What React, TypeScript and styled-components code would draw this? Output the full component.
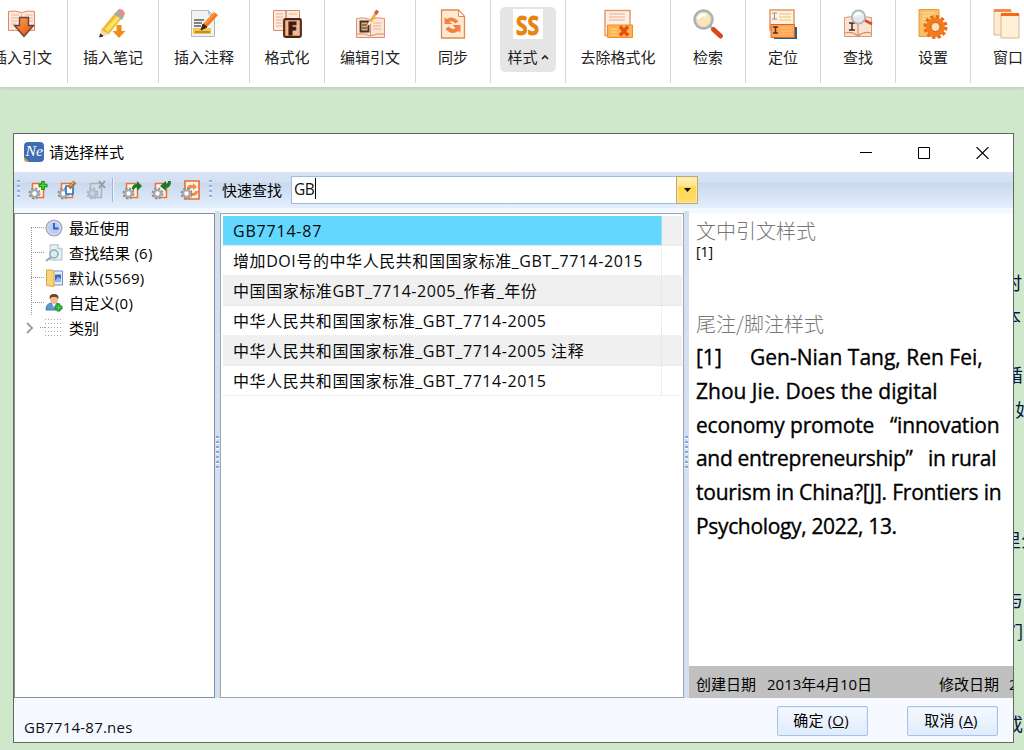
import React from "react";
import styled, { createGlobalStyle } from "styled-components";

const Global = createGlobalStyle`
  * { box-sizing: border-box; }
  html, body { margin: 0; padding: 0; }
  body {
    width: 1024px; height: 750px; overflow: hidden; background: #cfe8cc;
    font-family: "Open Sans", "Noto Sans CJK SC", sans-serif; color: #111;
  }
`;

const Page = styled.div`
  position: relative; width: 1024px; height: 750px; overflow: hidden; background: #cfe8cc;
`;
const Ribbon = styled.div`
  display: flex; height: 87px; background: #fff;
  box-shadow: 0 1px 0 #c3d3c1, 0 2px 2px #bdd3bb;
`;
const RibbonRow = styled.div`
  display: flex; flex: none; margin-left: -23px; height: 83px;
`;
const RibbonItem = styled.div<{ $w: number }>`
  flex: none; width: ${(p) => p.$w}px; height: 83px; border-right: 1px solid #d5d5d5;
  display: flex; justify-content: center; padding-top: 7px;
`;
const RibbonButton = styled.div<{ $active?: boolean }>`
  display: flex; flex-direction: column; align-items: center; height: 65px; padding: 2px 7px 0;
  border-radius: 5px; background: ${(p) => (p.$active ? "#e5e5e5" : "transparent")};
  svg { display: block; flex: none; }
`;
const RibbonLabel = styled.div`
  display: flex; align-items: center; gap: 3px; margin-top: 7px; height: 22px;
  font: 15px/22px "Noto Sans CJK SC", sans-serif; color: #222; white-space: nowrap;
`;

const DocFragment = styled.span<{ $x: number; $y: number }>`
  position: absolute; left: ${(p) => p.$x}px; top: ${(p) => p.$y}px;
  font: 18px/24px "Noto Sans CJK SC", sans-serif; color: #0b1245; white-space: nowrap;
`;

const Dialog = styled.div`
  position: absolute; left: 13px; top: 133px; width: 1001px; height: 610px;
  display: flex; flex-direction: column; background: #f6f9ff; border: 1px solid #606b60; overflow: hidden;
`;
const TitleBar = styled.div`
  display: flex; align-items: center; height: 38px; flex: none; padding: 0 24px 2px 10px; background: #fff;
`;
const Title = styled.div`
  flex: 1; margin-left: 5px; font: 15px/22px "Noto Sans CJK SC", sans-serif; color: #000;
`;
const WindowButtons = styled.div`
  display: flex; align-items: center; gap: 46px; padding-top: 2px; svg { display: block; }
`;
const Toolbar = styled.div`
  display: flex; align-items: center; height: 36px; flex: none; padding-left: 3px;
  background: linear-gradient(#d9e5f5 0, #d3e0f1 10px, #c9d8ed 11px, #d6e4f6 24px, #e4effd 36px);
`;
const Grip = styled.div<{ $ml?: number }>`
  width: 3px; height: 18px; flex: none; margin: -3px 1px 0 ${(p) => p.$ml || 0}px;
  background: repeating-linear-gradient(#8fb0dd 0 2px, #ecf3fc 2px 3px, transparent 3px 5px);
`;
const ToolIcons = styled.div<{ $ml: number }>`
  display: flex; gap: 9px; margin-left: ${(p) => p.$ml}px; svg { display: block; }
`;
const ToolSep = styled.div`
  width: 2px; height: 24px; margin-left: 6px; background: #9db6d8; border-right: 1px solid #f1f6fd;
`;
const SearchLabel = styled.div`
  margin-left: 9px; width: 69px; font: 15px/22px "Noto Sans CJK SC", sans-serif; color: #000; white-space: nowrap;
`;
const Combo = styled.div`
  display: flex; width: 407px; height: 28px; border: 1px solid #9fbbe3; background: #fff;
`;
const ComboText = styled.div`
  flex: 1; display: flex; align-items: center; padding: 0 0 3px 2px; font-size: 15.5px; line-height: 22px; letter-spacing: -0.4px;
`;
const Caret = styled.i`
  width: 1px; height: 21px; background: #000; margin-left: 1px;
`;
const ComboArrow = styled.div`
  display: flex; align-items: center; justify-content: center; width: 22px; height: 28px; margin: -1px -1px 0 0;
  border: 1px solid #c0a870; box-shadow: inset 0 0 0 1px #ffe9a0;
  background: linear-gradient(#fff1b8 0, #ffe48d 9px, #ffd54d 10px, #ffdf70 100%);
`;
const Strip = styled.div`
  height: 5px; flex: none; background: #f4f8ff;
`;
const Body = styled.div`
  display: flex; height: 485px; flex: none;
`;
const Tree = styled.div`
  width: 201px; flex: none; border: 1px solid #8a8f99; background: #fff; padding: 1px 0 0 16px;
`;
const TreeGroup = styled.div`
  position: relative; height: 100px;
  &::before {
    content: ""; position: absolute; left: 0; top: 13px; width: 1px; height: 88px;
    background: repeating-linear-gradient(#999 0 1px, transparent 1px 2px);
  }
`;
const TreeRow = styled.div`
  display: flex; align-items: center; height: 25px;
  svg { display: block; flex: none; }
`;
const Chevron = styled.svg`
  margin-left: -5px;
`;
const Dots = styled.div<{ $w: number; $ml?: number }>`
  width: ${(p) => p.$w}px; height: 1px; margin-left: ${(p) => p.$ml || 0}px; flex: none;
  background: repeating-linear-gradient(90deg, #999 0 1px, transparent 1px 2px);
`;
const TreeIcon = styled.div`
  width: 18px; height: 18px; margin-left: 1px;
`;
const TreeText = styled.div<{ $ls?: number }>`
  margin-left: 6px; font-size: 15px; line-height: 24px; letter-spacing: ${(p) => p.$ls || 0}px; white-space: nowrap; color: #000;
`;
const Splitter = styled.div`
  width: 5px; flex: none; margin-top: -2px; background: #d3e0f2; display: flex; align-items: center; justify-content: center;
  &::before {
    content: ""; width: 3px; height: 33px; margin-bottom: 4px;
    background: repeating-linear-gradient(#83a9de 0 2px, #f4f8ff 2px 3px, transparent 3px 5px);
  }
`;
const List = styled.div`
  width: 464px; flex: none; border: 1px solid #a0a5ad; background: #fff; padding: 2px 1px 0 2px;
`;
const ListRow = styled.div<{ $bg: string }>`
  display: flex; height: 30px; border-bottom: 1px dotted #e4e4e4; background: ${(p) => p.$bg};
`;
const Cell = styled.div<{ $sel?: boolean; $ls: number }>`
  width: 439px; height: 29px; padding-left: 10px; border-right: 1px dotted #dedede;
  background: ${(p) => (p.$sel ? "#63d8ff" : "transparent")};
  font-size: 16px; line-height: 31px; letter-spacing: ${(p) => p.$ls}px; white-space: nowrap; color: #080808;
`;
const Preview = styled.div`
  flex: 1; min-width: 0; display: flex; flex-direction: column; background: #fff; overflow: hidden;
`;
const PreviewBody = styled.div`
  flex: 1; padding: 4px 0 0 7px;
`;
const Heading = styled.div`
  font: 300 20px/28px "Noto Sans CJK SC", sans-serif; color: #777; white-space: nowrap;
`;
const Sample = styled.div`
  height: 65px; font-size: 14px; line-height: 14px; color: #000;
`;
const Cite = styled.div`
  padding-top: 3px;
`;
const CiteLine = styled.div<{ $ls: number }>`
  font: 500 21px/33.75px "Open Sans", sans-serif; letter-spacing: ${(p) => p.$ls}px; white-space: pre; color: #000;
  -webkit-text-stroke: 0.35px #000;
`;
const CiteMark = styled.span`
  display: inline-block; width: 54px;
`;
const Dates = styled.div`
  display: flex; align-items: center; height: 32px; flex: none; padding: 2px 0 0 7px; background: #c0c0c0;
  font-size: 15px; white-space: nowrap; overflow: hidden; color: #000;
`;
const DateCell = styled.span<{ $w: number }>`
  width: ${(p) => p.$w}px; flex: none;
`;
const Footer = styled.div`
  flex: 1; display: flex; align-items: flex-start; padding: 8px 15px 0 10px;
`;
const FileName = styled.div`
  flex: 1; margin-top: 10px; font-size: 15px; line-height: 22px; letter-spacing: 0.23px; color: #111;
`;
const Button = styled.div`
  width: 91px; height: 30px; margin-left: 39px; padding-right: 3px; border: 1px solid #a3c3ee; border-radius: 2px;
  box-shadow: inset 0 0 0 1px #e3eefc; background: linear-gradient(#f5f9ff, #dfebfb);
  font-size: 15px; line-height: 27px; text-align: center; letter-spacing: 0.2px; color: #000;
`;

const ribbonIcons: Record<string, React.ReactNode> = {
  cite: (
    <>
      <defs><linearGradient id="dn" x1="0" y1="0" x2="1" y2="1"><stop stopColor="#ffa558" /><stop offset="1" stopColor="#dc4e0c" /></linearGradient></defs>
      <path d="M1.500 2.500q6-1.500 13 1q7-2.500 13-1v19q-7-1-13 1q-6-2-13-1z" fill="#fdeadf" stroke="#dd8868" />
      <path d="M4 6h8M4 9h7M4 12h7M4 15h5M18 6h8M20 9h6M20 12h6M14.500 3v5" stroke="#efb496" />
      <path d="M12.500 8.500h9v8h5l-9.500 11-9.500-11h5z" fill="url(#dn)" stroke="#6b4030" strokeWidth="1.400" />
    </>
  ),
  note: (
    <>
      <path d="M3 21 17 4l7 5-13 16-9 3z" fill="#eebc2f" />
      <path d="m7 20 13-14 3 2-13 15z" fill="#fce16a" />
      <path d="m3 21 8 4-9 3z" fill="#f4dbb4" /><path d="m2.500 25-.8 3 3.300-1z" fill="#333" stroke="#333" />
      <path d="m16 5 3-3 7 5-2 4z" fill="#9eacba" /><path d="m19 2 2-2q5 0 6 5l-2 3z" fill="#e88d84" />
      <path d="M18.500 16h5v6h4l-6.500 7-6.500-7h4z" fill="#f28c12" />
    </>
  ),
  annotate: (
    <>
      <path d="M2.500 1.500h17l6 6v20h-23z" fill="#f0f2f4" stroke="#b4b9be" />
      <path d="M19.500 1.500q-1 6 6 6z" fill="#d4dde8" stroke="#b4b9be" />
      <path d="M5 11h10M5 14h8M5 17h7" stroke="#5c5c5c" strokeWidth="1.300" />
      <path d="M4 19h18v6H4z" fill="#f8c64c" /><path d="M6 23h15" stroke="#745512" />
      <path d="m14 15 11-12 4 3-11 12z" fill="#f47a1c" /><path d="m16 15 10-11" stroke="#ffae64" />
      <path d="m14 15 4 3-6 3z" fill="#352820" stroke="#352820" />
    </>
  ),
  format: (
    <>
      <path d="M1.500 1.500h12.500v20h-12.500zM14 1.500h13.500v20H14z" fill="#fdeadf" stroke="#dc8a68" />
      <path d="M4 5h7M4 8h7M4 11h7M4 14h7M4 17h7M17 5h8" stroke="#efae8f" />
      <rect x="12" y="10" width="17" height="18" rx="1.500" fill="#d59069" stroke="#4a2514" strokeWidth="1.800" />
      <path d="M14 12h13v14H14z" fill="#f0bb98" />
      <text x="15.500" y="25.500" fontFamily="Open Sans" fontWeight="800" fontSize="17" fill="#3b1c10" stroke="#3b1c10" strokeWidth=".8">F</text>
    </>
  ),
  edit: (
    <>
      <path d="M1.500 9.500q7-2 14 1q7-3 14-1v19h-28z" fill="#fbe6d5" stroke="#dc9270" />
      <path d="M2 25q8-1 13.500 2q6-3 13.500-2M15.500 10v17" fill="none" stroke="#d98d66" />
      <path d="M18 14h8M18 17h8M18 20h8" stroke="#ecb392" />
      <path d="M5.500 12.500h8v10h-8z" fill="#d9ae7a" stroke="#493221" strokeWidth="1.800" /><path d="M7 16h5M7 19h5" stroke="#493221" />
      <path d="M15 13 22 3" stroke="#efae42" strokeWidth="3" /><path d="m20.500 5 2-3.500" stroke="#d84d5a" strokeWidth="3.500" /><path d="m12 17 2-5 3 2z" fill="#fff5d5" />
    </>
  ),
  sync: (
    <>
      <path d="M3.500 1h17l6 6.500V29h-23z" fill="#fdeacf" stroke="#df8b59" strokeWidth="1.300" />
      <path d="M20.500 1v6.500h6z" fill="#fff" stroke="#df8b59" />
      <path d="M6.500 15v-7l2 2q6-4 12 2l-3 2.500q-4-3.500-6-1.500l3 2z" fill="#f28148" />
      <path d="M22.500 16v8l-2-2q-7 5-13-2l3-2.500q4 4 7 1.500l-3-3z" fill="#f28148" />
    </>
  ),
  style: (
    <>
      <path d="M0 0h30v30H0z" fill="#fff" />
      <text x="3" y="25.500" fontFamily="Open Sans" fontWeight="700" fontSize="27" fill="#e8830c" stroke="#e8830c" strokeWidth=".9" textLength="23" lengthAdjust="spacingAndGlyphs">SS</text>
    </>
  ),
  unformat: (
    <>
      <path d="M2 1.500h25v25H2z" fill="#fdf0e6" stroke="#e59a70" strokeWidth="1.500" />
      <path d="M6 5h16M6 8h16M6 11h16" stroke="#eda984" />
      <path d="M4.500 16h25v12.500h-25z" fill="#ffb253" stroke="#f58b26" />
      <path d="M8 20h6M8 23h6M8 26h6M17 20h9M17 23h9" stroke="#ffdb9b" />
      <path d="m17 17.500 8 9M25 17.500l-8 9" stroke="#e65208" strokeWidth="3.400" />
    </>
  ),
  search: (
    <>
      <circle cx="10.500" cy="10.500" r="9" fill="#fae8c7" stroke="#a9b0b4" strokeWidth="2.500" />
      <circle cx="10.500" cy="10.500" r="7" fill="#fbe6bd" stroke="#ead5a9" /><path d="M5 10q2-5 8-4" fill="none" stroke="#fff" strokeWidth="3" />
      <path d="m17 17 4 4" stroke="#b5b5b5" strokeWidth="2.500" /><path d="m20.500 20.500 7 6.500" stroke="#d8481a" strokeWidth="4.800" strokeLinecap="round" />
    </>
  ),
  locate: (
    <>
      <path d="M2 1h24v20H2z" fill="#fff1df" stroke="#e4966d" strokeWidth="1.500" />
      <path d="M4 4h5M6.500 4v6M4 10h5" stroke="#8d9298" /><path d="M11 5h12M11 8h12M11 11h12" stroke="#efc374" />
      <path d="M26 18h3v12H6v-2h20z" fill="#14668c" /><path d="M3 15.500h23.500v13H3z" fill="#ffa55e" stroke="#e76116" />
      <path d="M5 18h5M7.500 18v6M5 24h5" stroke="#53301f" strokeWidth="1.500" /><path d="M13 19h11M13 22h11M13 25h11" stroke="#ffc36b" />
    </>
  ),
  find: (
    <>
      <path d="M1.500 8.500q7-2 13.500 1q6-3 13.500-1v19h-27z" fill="#fbe3d2" stroke="#d99877" />
      <path d="M2 24q7-2 13 3q6-5 13-3M15 10v17" fill="none" stroke="#d98f6b" strokeWidth="1.200" />
      <path d="M6 14h6M9 14v7M6 21h6" stroke="#402c25" strokeWidth="1.500" />
      <circle cx="15.500" cy="8" r="6.700" fill="#e2ecf0" fillOpacity=".9" stroke="#aeb6ba" strokeWidth="1.800" />
      <path d="M12 7q2-4 6-2" fill="none" stroke="#fff" strokeWidth="2" /><path d="m22 11.500 7 3.500" stroke="#d74c2d" strokeWidth="2.600" />
    </>
  ),
  settings: (
    <>
      <path d="M1 0.500h20v27H1z" fill="#f8bf68" stroke="#e49c3f" /><path d="M4 4h13M4 7h10M4 10h8M4 13h5" stroke="#fde0a3" />
      <circle cx="17.500" cy="18" r="10.300" fill="none" stroke="#ec6a12" strokeWidth="3.500" strokeDasharray="3.200 2.193" />
      <circle cx="17.500" cy="18" r="7" fill="#fff2df" stroke="#f27c1b" strokeWidth="5" />
      <circle cx="17.500" cy="18" r="4.500" fill="#fce1bb" stroke="#ce5310" />
    </>
  ),
  window: (
    <>
      <path d="M1 1h17v25H1z" fill="#fdecd1" stroke="#ddb893" /><path d="M1 0h17v3H1z" fill="#f58a50" />
      <path d="M8 5h18v24H8z" fill="#fff0d7" stroke="#d6b694" /><path d="M8 4h18v3H8z" fill="#f66a15" />
    </>
  ),
};

const ribbon: [string, string, number][] = [
  ["插入引文", "cite", 91], ["插入笔记", "note", 91], ["插入注释", "annotate", 91], ["格式化", "format", 75],
  ["编辑引文", "edit", 91], ["同步", "sync", 75], ["样式", "style", 75], ["去除格式化", "unformat", 105],
  ["检索", "search", 75], ["定位", "locate", 75], ["查找", "find", 75], ["设置", "settings", 75], ["窗口", "window", 75],
];

const ToolIcon = ({ kind }: { kind: string }) => {
  const off = kind === "del";
  return (
    <svg width="20" height="20" viewBox="0 0 20 20">
      {kind === "refresh" ? (
        <>
          <path d="M5 1h14v18H5z" fill="#fff3e7" stroke="#ea6c2c" strokeWidth="1.600" />
          <path d="M7 9q0-5 6-4V3l4 4-4 3V8q-3 0-3 2zM18 11q0 5-6 5v2l-4-4 4-3v2q3 0 3-2z" fill="#f28a4b" />
        </>
      ) : (
        <path d="M4.500 3.500h11v14h-11z" fill={off ? "#d3dce8" : "#fff5e9"} stroke={off ? "#a9b4c2" : "#e9713a"} strokeWidth="1.500" />
      )}
      <circle cx="6.500" cy="13.500" r="5" fill="none" stroke={off ? "#a8b2c0" : "#8c8c8c"} strokeWidth="2" strokeDasharray="2.200 1.727" />
      <circle cx="6.500" cy="13.500" r="3.400" fill={off ? "#cdd7e4" : "#fff"} stroke={off ? "#b3bdca" : "#a8a8a8"} strokeWidth="2.400" />
      {kind === "add" && <path d="M15 1v9M10.500 5.500h9" stroke="#169016" strokeWidth="3.600" />}
      {kind === "add" && <path d="M15 2v7M11.500 5.500h7" stroke="#42dc32" strokeWidth="1.500" />}
      {kind === "edit" && <><path d="M9 6h7v8H9z" fill="#fff" stroke="#2878cf" strokeWidth="1.700" /><path d="m12 8 6-6" stroke="#b67832" strokeWidth="4" /><path d="m13 6 4-4" stroke="#f4b96c" /></>}
      {off && <path d="m13 1 6 7M19 1l-6 7" stroke="#8f9aa8" strokeWidth="1.800" />}
      {kind === "export" && <path d="M10 9q0-5 5-5V1l5 5-5 5V7.500q-3 0-3 3z" fill="#187a25" />}
      {kind === "import" && <path d="M20 1q0 7-5 7v3l-6-5 6-5v3q2 0 2-3z" fill="#187a25" />}
    </svg>
  );
};

const treeIcons: Record<string, React.ReactNode> = {
  clock: (
    <>
      <circle cx="9" cy="9" r="7.800" fill="#dce6fa" stroke="#a7aeb9" strokeWidth="1.600" /><circle cx="9" cy="9" r="6" fill="#b9ccf6" />
      <path d="M9 4v5.500h4.500" fill="none" stroke="#3158c0" strokeWidth="1.800" />
    </>
  ),
  result: (
    <>
      <path d="M5 .8h8l4 4V16H5z" fill="#e6eff3" stroke="#aebfca" /><path d="M13 .8v4h4" fill="#fff" stroke="#aebfca" />
      <circle cx="9" cy="10" r="4" fill="#d8eef5" stroke="#93a7b4" strokeWidth="1.500" /><path d="m6 13-5 4" stroke="#98a5ad" strokeWidth="2" />
    </>
  ),
  folder: (
    <>
      <path d="M7 2h10.500v14H7z" fill="#e3ebf8" stroke="#768fb6" /><path d="M10 5.500h6v7h-6z" fill="#3e69c2" /><path d="m10 12 3-4 3 2v2.500z" fill="#98b9ee" />
      <path d="M1.500 1h6l1.500 2v14.500l-7.500-1z" fill="#f8d477" stroke="#d5a847" />
    </>
  ),
  user: (
    <>
      <path d="M1 16q0-7 6-7h4q5 0 5 7z" fill="#6297d4" stroke="#4878b0" /><path d="m7 9 2 5 2-5z" fill="#fff" />
      <path d="M5 4q0-4 4-4t4 4v2q-1 4-4 4T5 6z" fill="#efbd90" /><path d="M4.500 5Q4 0 9 0t4.500 5L11 3H7z" fill="#6e4630" />
      <path d="M13.500 9.500v8M9.500 13.500h8" stroke="#178e27" strokeWidth="3.500" /><path d="M13.500 10.500v6M10.500 13.500h6" stroke="#43d84c" strokeWidth="1.500" />
    </>
  ),
};

const tree: [string, string, number][] = [
  ["最近使用", "clock", 0.2], ["查找结果 (6)", "result", 0.3], ["默认(5569)", "folder", 0.3], ["自定义(0)", "user", 0.3],
];
const styles: [string, number][] = [
  ["GB7714-87", 0.8],
  ["增加DOI号的中华人民共和国国家标准_GBT_7714-2015", 0.57],
  ["中国国家标准GBT_7714-2005_作者_年份", 0.57],
  ["中华人民共和国国家标准_GBT_7714-2005", 0.57],
  ["中华人民共和国国家标准_GBT_7714-2005 注释", 0.57],
  ["中华人民共和国国家标准_GBT_7714-2015", 0.57],
];
const citation: [string, number, string?][] = [
  ["Gen-Nian Tang, Ren Fei,", 0, "[1]"],
  ["Zhou Jie. Does the digital", 0],
  ["economy promote   “innovation", -0.18],
  ["and entrepreneurship”   in rural", -0.31],
  ["tourism in China?[J]. Frontiers in", -0.21],
  ["Psychology, 2022, 13.", -0.34],
];
const fragments: [string, number, number][] = [
  ["时", 1004, 270], ["本", 1003, 304], ["循", 1005, 362], ["如", 1015, 397], ["里分", 1003, 527], ["与", 1005, 587], ["们", 1005, 619], ["或", 1005, 711],
];

export default function App() {
  return (
    <Page>
      <Global />
      <Ribbon>
        <RibbonRow>
          {ribbon.map(([label, icon, w]) => (
            <RibbonItem key={label} $w={w}>
              <RibbonButton $active={icon === "style"}>
                <svg width="30" height="30" viewBox="0 0 30 30">{ribbonIcons[icon]}</svg>
                <RibbonLabel>
                  {label}
                  {icon === "style" && <svg width="8" height="6" viewBox="0 0 8 6"><path d="m1 5 3-3 3 3" fill="none" stroke="#222" strokeWidth="1.600" /></svg>}
                </RibbonLabel>
              </RibbonButton>
            </RibbonItem>
          ))}
        </RibbonRow>
      </Ribbon>

      {fragments.map(([t, x, y]) => <DocFragment key={t} $x={x} $y={y}>{t}</DocFragment>)}

      <Dialog>
        <TitleBar>
          <svg width="20" height="20" viewBox="0 0 20 20">
            <rect width="20" height="20" rx="4" fill="#3f6db3" />
            <path d="M0 15v1q0 4 4 4h1z" fill="#f0a030" />
            <text x="1.500" y="14" fontFamily="Liberation Serif" fontStyle="italic" fontSize="14" fill="#fff" textLength="17.500" lengthAdjust="spacingAndGlyphs">Ne</text>
          </svg>
          <Title>请选择样式</Title>
          <WindowButtons>
            <svg width="12" height="12"><path d="M0 5.500h12" stroke="#000" /></svg>
            <svg width="12" height="12"><path d="M.5.5h11v11H.5z" fill="none" stroke="#000" /></svg>
            <svg width="13" height="12"><path d="m.5 0 12 12m0-12-12 12" stroke="#000" strokeWidth="1.100" /></svg>
          </WindowButtons>
        </TitleBar>
        <Toolbar>
          <Grip />
          <ToolIcons $ml={7}>
            <ToolIcon kind="add" /><ToolIcon kind="edit" /><ToolIcon kind="del" />
          </ToolIcons>
          <ToolSep />
          <ToolIcons $ml={8}>
            <ToolIcon kind="export" /><ToolIcon kind="import" /><ToolIcon kind="refresh" />
          </ToolIcons>
          <Grip $ml={9} />
          <SearchLabel>快速查找</SearchLabel>
          <Combo>
            <ComboText>GB<Caret /></ComboText>
            <ComboArrow><svg width="7" height="4"><path d="M0 0h7L3.500 4z" fill="#111" /></svg></ComboArrow>
          </Combo>
        </Toolbar>
        <Strip />
        <Body>
          <Tree>
            <TreeGroup>
              {tree.map(([label, icon, ls]) => (
                <TreeRow key={label}>
                  <Dots $w={13} />
                  <TreeIcon><svg width="18" height="18" viewBox="0 0 18 18">{treeIcons[icon]}</svg></TreeIcon>
                  <TreeText $ls={ls}>{label}</TreeText>
                </TreeRow>
              ))}
            </TreeGroup>
            <TreeRow>
              <Chevron width="8" height="12" viewBox="0 0 8 12"><path d="m1 1 5 5-5 5" fill="none" stroke="#a0a0a0" strokeWidth="2" /></Chevron>
              <Dots $w={5} $ml={6} />
              <svg width="18" height="18" viewBox="0 0 18 18">
                {[1, 5, 9, 13, 17].map((y) => <path key={y} d={`M0 ${y - 0.5}h18`} stroke="#a8a8a8" strokeDasharray="1 2" />)}
              </svg>
              <TreeText>类别</TreeText>
            </TreeRow>
          </Tree>
          <Splitter />
          <List>
            {styles.map(([name, ls], i) => (
              <ListRow key={name} $bg={i % 2 === 0 ? "#f0f0f0" : "#fff"}>
                <Cell $sel={i === 0} $ls={ls}>{name}</Cell>
              </ListRow>
            ))}
          </List>
          <Splitter />
          <Preview>
            <PreviewBody>
              <Heading>文中引文样式</Heading>
              <Sample>[1]</Sample>
              <Heading>尾注/脚注样式</Heading>
              <Cite>
                {citation.map(([line, ls, mark]) => (
                  <CiteLine key={line} $ls={ls}>{mark && <CiteMark>{mark}</CiteMark>}{line}</CiteLine>
                ))}
              </Cite>
            </PreviewBody>
            <Dates>
              <DateCell $w={71}>创建日期</DateCell>
              <DateCell $w={172}>2013年4月10日</DateCell>
              <DateCell $w={70}>修改日期</DateCell>
              <DateCell $w={80}>2013年4月</DateCell>
            </Dates>
          </Preview>
        </Body>
        <Footer>
          <FileName>GB7714-87.nes</FileName>
          <Button>确定 (<u>O</u>)</Button>
          <Button>取消 (<u>A</u>)</Button>
        </Footer>
      </Dialog>
    </Page>
  );
}
